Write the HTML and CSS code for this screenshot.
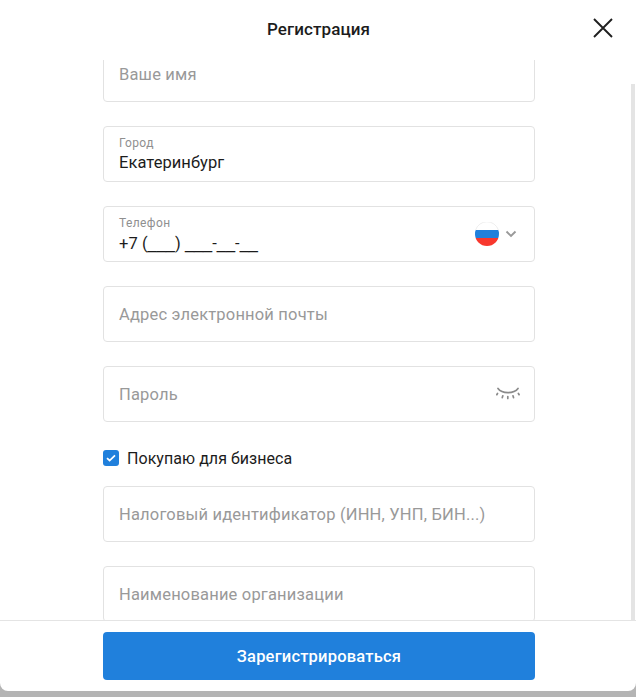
FILE: index.html
```html
<!DOCTYPE html>
<html lang="ru">
<head>
<meta charset="utf-8">
<title>Регистрация</title>
<link rel="stylesheet" href="styles.css">
</head>
<body>
<div class="modal">
  <header class="head">
    <h1 class="title">Регистрация</h1>
    <button class="close" aria-label="Закрыть">
      <svg width="20" height="20" viewBox="0 0 20 20"><path d="M1 1l18 18M19 1L1 19" fill="none" stroke="#1f1f1f" stroke-width="1.900"/></svg>
    </button>
  </header>
  <div class="scroll">
    <form class="form">
      <div class="field"><span class="ph">Ваше имя</span></div>
      <div class="field stacked"><span class="label">Город</span><span class="value">Екатеринбург</span></div>
      <div class="field stacked with-icon">
        <span class="label">Телефон</span><span class="value">+7 (<span class="mask">___</span>) <span class="mask">___</span>-<span class="mask">__</span>-<span class="mask">__</span></span>
        <span class="phone-end">
          <svg class="flag" width="24" height="24" viewBox="0 0 24 24"><defs><clipPath id="c"><circle cx="12" cy="12" r="12"/></clipPath></defs><g clip-path="url(#c)"><rect width="24" height="8.500" fill="#fff"/><rect y="8" width="24" height="8" fill="#2080dc"/><rect y="16" width="24" height="8" fill="#f8382e"/></g><path d="M.6 8a12 12 0 0 1 22.800 0" fill="none" stroke="#e6e6e6" stroke-width=".7"/></svg>
          <svg width="12" height="8" viewBox="0 0 12 8"><path d="M1.500 1.500L6 6l4.500-4.500" fill="none" stroke="#999" stroke-width="1.900"/></svg>
        </span>
      </div>
      <div class="field"><span class="ph">Адрес электронной почты</span></div>
      <div class="field with-icon"><span class="ph">Пароль</span>
        <svg class="eye" width="24" height="14" viewBox="0 0 24 14"><g fill="none" stroke="#8a8a8a" stroke-linecap="round"><path d="M2 1.500C6 7 18 7 22 1.500" stroke-width="1.700"/><path d="M1.500 6.500l-.7 1.200M6.800 8.800l-.5 1.800M11.800 9.500v2M17 8.800l.5 1.800M22.400 6.500l.7 1.200" stroke-width="1.700"/></g></svg>
      </div>
      <label class="check">
        <span class="box"><svg width="10" height="8" viewBox="0 0 10 8"><path d="M1 4.200L3.600 6.500 9 1.300" fill="none" stroke="#fff" stroke-width="1.700"/></svg></span>
        Покупаю для бизнеса
      </label>
      <div class="field"><span class="ph">Налоговый идентификатор (ИНН, УНП, БИН...)</span></div>
      <div class="field"><span class="ph">Наименование организации</span></div>
    </form>
    <div class="thumb"></div>
  </div>
  <footer class="foot"><button class="submit" type="button">Зарегистрироваться</button></footer>
</div>
</body>
</html>
```
FILE: styles.css
```css
* { box-sizing: border-box; }
html, body { margin: 0; height: 100%; }
body {
  background: #b4b4b4;
  font-family: Roboto, "Liberation Sans", sans-serif;
  overflow: hidden;
}
.modal {
  height: 691px;
  background: #fff;
  border-radius: 0 0 8px 8px;
  display: flex;
  flex-direction: column;
  overflow: hidden;
}
.head {
  height: 60px;
  flex: none;
  position: relative;
  display: flex;
  align-items: center;
  justify-content: center;
  padding: 0 0 3px 1px;
}
.title {
  margin: 0;
  font-size: 17px;
  font-weight: 500;
  color: #1c1c1c;
  letter-spacing: .1px;
}
.close {
  position: absolute;
  left: 593px;
  top: 18px;
  width: 20px;
  height: 20px;
  padding: 0;
  border: 0;
  background: none;
  display: block;
}
.close svg { display: block; }
.scroll {
  flex: 1;
  min-height: 0;
  overflow: hidden;
  position: relative;
}
.form {
  margin: -14px 101px 0 103px;
  display: flex;
  flex-direction: column;
  gap: 24px;
}
.field {
  height: 56px;
  flex: none;
  border: 1px solid #e2e2e2;
  border-radius: 4px;
  padding: 0 15px;
  display: flex;
  align-items: center;
  position: relative;
  font-size: 16px;
}
.stacked {
  flex-direction: column;
  align-items: flex-start;
  justify-content: flex-start;
  padding-top: 9px;
}
.ph { color: #999; font-size: 16.500px; letter-spacing: .18px; }
.label { font-size: 12px; line-height: 14px; color: #8f8f8f; letter-spacing: .4px; }
.value { font-size: 16.500px; line-height: 20px; color: #1c1c1c; margin-top: 3px; letter-spacing: .05px; }
.mask { font-family: "Liberation Sans", sans-serif; font-size: 16.400px; letter-spacing: 0; }
.phone-end {
  position: absolute;
  right: 17px;
  top: 15px;
  display: flex;
  align-items: center;
  gap: 6px;
}
.flag { display: block; }
.eye { position: absolute; right: 14px; top: 20px; }
.check {
  display: flex;
  align-items: center;
  gap: 8px;
  height: 16px;
  margin: 4px 0 -4px;
  font-size: 16px;
  letter-spacing: .05px;
  color: #1c1c1c;
}
.box {
  width: 16px;
  height: 16px;
  border-radius: 3px;
  background: #2080dc;
  display: flex;
  align-items: center;
  justify-content: center;
}
.thumb {
  position: absolute;
  right: 1px;
  top: 24px;
  bottom: 0;
  width: 4px;
  background: #e4e4e4;
}
.foot {
  height: 71px;
  flex: none;
  border-top: 1px solid #e4e4e4;
  padding: 11px 101px 0 103px;
}
.submit {
  display: block;
  width: 100%;
  height: 48px;
  border: 0;
  border-radius: 4px;
  background: #2080dc;
  color: #fff;
  font: 500 16.500px Roboto, "Liberation Sans", sans-serif;
  letter-spacing: .2px;
}
```
